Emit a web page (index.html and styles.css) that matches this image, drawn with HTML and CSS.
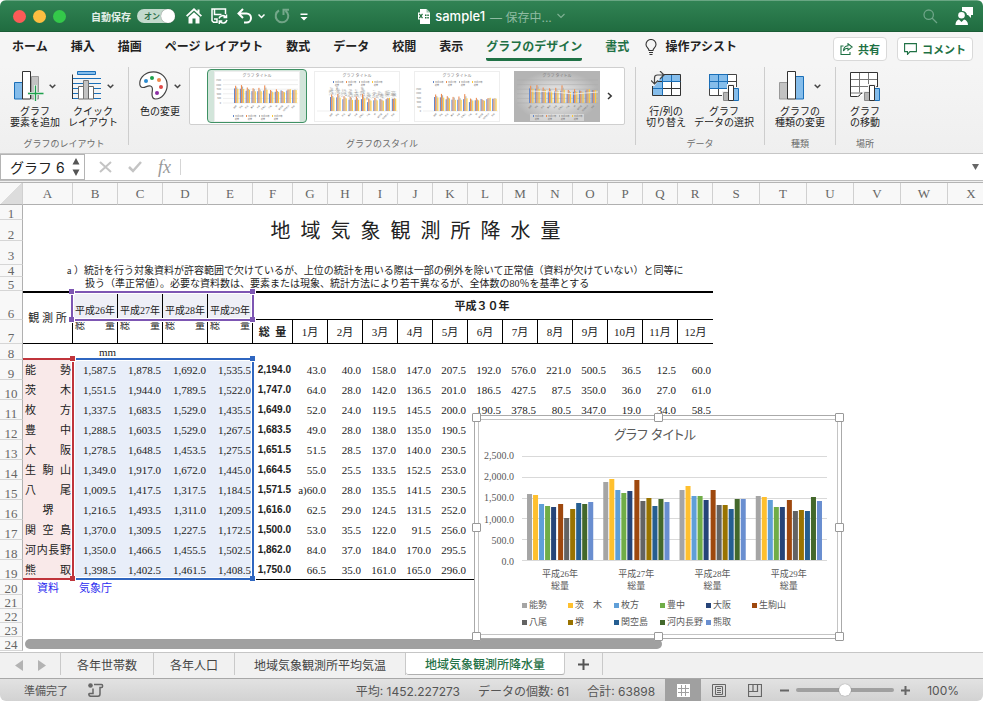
FILE: index.html
```html
<!DOCTYPE html>
<html lang="ja">
<head>
  <meta charset="UTF-8">
  <meta name="viewport" content="width=device-width, initial-scale=1.0">
  <title>sample1</title>
  <link rel="stylesheet" href="styles.css">
</head>
<body>
  <div class="window">
    <header class="titlebar">
      <div class="title-left">
        <div class="lights">
          <button class="light red" aria-label="閉じる"></button>
          <button class="light yellow" aria-label="しまう"></button>
          <button class="light green" aria-label="拡大"></button>
        </div>
        <label class="autosave">自動保存
          <span class="switch"><input type="checkbox" checked><span>オン</span></span>
        </label>
        <div class="quick">
          <button aria-label="ホーム"><svg width="16" height="16" viewBox="0 0 16 16"><path d="M8 0 0 7.5l1.2 1.3L8 2.6l6.800 6.200L16 7.500 13.500 5.200V1.500h-2v1.800z" fill="#fff"/><path d="M8 4.200 2.500 9.200V15.500h4v-5h3v5h4V9.200z" fill="#fff"/></svg></button>
          <button aria-label="保存"><svg width="17" height="17" viewBox="0 0 17 17" fill="none" stroke="#fff" stroke-width="1.500"><path d="M6 14.300H2.500L1 12.800V1h13.500v5"/><path d="M3.500 1v5.500h7"/><path d="M3 11h3v4"/><path d="M8 10.500a4 4 0 0 1 7-1.300M15.500 6.500v3h-3M16 12a4 4 0 0 1-7 1.500M8.300 16v-3h3"/></svg></button>
          <button aria-label="元に戻す"><svg width="16" height="16" viewBox="0 0 16 16" fill="none" stroke="#fff" stroke-width="2"><path d="M6 1 1.500 5.500 6 10M2 5.500h7.500a4.500 4.500 0 0 1 0 9H7"/></svg></button>
          <button class="history" aria-label="履歴"><svg width="7" height="16" viewBox="0 0 7 16" fill="none" stroke="#fff" stroke-width="1.500"><path d="m.5 6.500 3 3 3-3"/></svg></button>
          <button class="dim" aria-label="やり直し"><svg width="16" height="16" viewBox="0 0 16 16" fill="none" stroke="#fff" stroke-width="2"><path d="M11.500 2.800A6.300 6.300 0 1 1 5 2.500M9.500 7V1.800H15"/></svg></button>
          <button aria-label="カスタマイズ"><svg width="10" height="16" viewBox="0 0 10 16"><path d="M1.500 5.500h7v1.500h-7zM1.500 9h7L5 12.500z" fill="#fff"/></svg></button>
        </div>
      </div>
      <div class="doc">
        <svg width="12" height="15" viewBox="0 0 12 15"><path d="M2 0h6.500L12 3.500V15H2z" fill="#fff"/><path d="M8.500 0v3.500H12" fill="#9cc6ad"/><path d="M0 3.500h6v7H0z" fill="#fff"/><path d="m1.300 4.800 3.200 4.400M4.500 4.800 1.300 9.200" stroke="#23713f" stroke-width="1.200"/><path d="M7 5.500h1.500v1.500H7zM9.300 5.500h1.500v1.500H9.300zM7 8h1.500v1.500H7zM9.300 8h1.500v1.500H9.300z" fill="#23713f"/></svg>
        <span class="doc-name">sample1</span>
        <span class="doc-state">— 保存中...</span>
        <svg width="8" height="6" viewBox="0 0 8 6" fill="none" stroke="#7db092" stroke-width="1.200"><path d="m.5 1 3.500 3.500L7.500 1"/></svg>
      </div>
      <div class="title-right">
        <button aria-label="検索"><svg width="15" height="15" viewBox="0 0 15 15" fill="none" stroke="#6ea588" stroke-width="1.300"><circle cx="5.700" cy="5.700" r="4.700"/><path d="m9 9 5 5"/></svg></button>
        <button aria-label="アカウント"><svg width="18" height="18" viewBox="0 0 18 18" fill="#fff"><path d="M7 0h11v8h-2v3l-3-3h-1A4.500 4.500 0 0 0 7 4z"/><circle cx="6.500" cy="8.300" r="3.300"/><path d="M.5 18c0-4 2.500-5.500 3.500-5.500L6.500 15 9 12.500c2 .5 4 2 4 5.500z"/></svg></button>
      </div>
    </header>

    <nav class="menu">
      <button>ホーム</button>
      <button>挿入</button>
      <button>描画</button>
      <button>ページ レイアウト</button>
      <button>数式</button>
      <button>データ</button>
      <button>校閲</button>
      <button>表示</button>
      <button class="context current">グラフのデザイン</button>
      <button class="context">書式</button>
      <button class="assist"><svg width="12" height="17" viewBox="0 0 12 17" fill="none" stroke="#333" stroke-width="1.100"><path d="M4 11.500C4 9 1 8.500 1 5.500a5 5 0 0 1 10 0c0 3-3 3.500-3 6zM4 13.500h4M4.500 15.500h3"/></svg>操作アシスト</button>
      <div class="menu-right">
        <button class="pill"><svg width="13" height="12" viewBox="0 0 13 12" fill="none" stroke="#1f7145" stroke-width="1.100"><path d="M3.500 3H1v8.500h9V9"/><path d="M8 .8 12.200 4 8 7.200V5.300C6 5.200 4.500 6 3.500 8c0-3.500 2-5 4.500-5.200z"/></svg>共有</button>
        <button class="pill"><svg width="13" height="12" viewBox="0 0 13 12" fill="none" stroke="#1f7145" stroke-width="1.100"><path d="M.6.600h11.800v8H6l-2.500 2.800V8.600H.6z"/></svg>コメント</button>
      </div>
    </nav>

    <section class="ribbon">
      <div class="group">
        <div class="tools">
          <button class="tool">
            <span class="tool-icon">
              <svg width="30" height="30" viewBox="0 0 30 30"><path d="M17.500 5.500h7V28h-7z" fill="#c3c3c3" stroke="#999"/><path d="M.5 11.500h8V28h-8z" fill="#85bdeb" stroke="#1a6fb8"/><path d="M8.500.500h8V28h-8z" fill="#fff" stroke="#333"/><path d="M21.500 14v16M13.500 22.500h16" stroke="#f2f2f2" stroke-width="3"/><path d="M21.500 14.500V30M14 22.500h15.500" stroke="#1ea14c" stroke-width="1.300"/></svg>
              <svg class="chev" width="7" height="5" viewBox="0 0 7 5"><path d="m.7.700 2.800 2.800L6.300.700"/></svg>
            </span>
            グラフ<br>要素を追加
          </button>
          <button class="tool">
            <span class="tool-icon">
              <svg width="30" height="30" viewBox="0 0 30 30"><path d="M5.500.500h18v3h-18z" fill="#85bdeb" stroke="#1a6fb8"/><path d="M1 7.500h28M1 12.500h28M1 17.500h28M1 22.500h28M1 27.500h28" stroke="#1a6fb8"/><path d="M.5 3.500V28" stroke="#333"/><path d="M6.500 15.500h5V28h-5z" fill="#fff" stroke="#666"/><path d="M11.500 9.500h5V28h-5z" fill="#c3c3c3" stroke="#777"/><path d="M16.500 15.500h5V28h-5z" fill="#fff" stroke="#666"/></svg>
              <svg class="chev" width="7" height="5" viewBox="0 0 7 5"><path d="m.7.700 2.800 2.800L6.300.700"/></svg>
            </span>
            クイック<br>レイアウト
          </button>
        </div>
        <div class="group-name">グラフのレイアウト</div>
      </div>

      <div class="group">
        <div class="tools">
          <button class="tool">
            <span class="tool-icon">
              <svg width="30" height="30" viewBox="0 0 30 30"><path d="M14.500.800C7 .800 1 6 .800 12c-.2 3 1 4.500 3.200 4.500 3 0 4.500-2.500 7.500-1.500 3.500 1.200 1.500 4.500 1.500 8 0 3 1 5 3.500 5 6 0 11.700-6.500 11.700-14S22 .800 14.500.800z" fill="#fff" stroke="#444" stroke-width="1.200"/><circle cx="7" cy="10" r="2" fill="#2b8bd0"/><circle cx="13" cy="7" r="2" fill="#1ea14c"/><circle cx="20" cy="9" r="2" fill="#ef8a4b"/><circle cx="22" cy="16" r="2" fill="#e04848"/><circle cx="18" cy="22" r="2" fill="#8d2fa5"/></svg>
              <svg class="chev" width="7" height="5" viewBox="0 0 7 5"><path d="m.7.700 2.800 2.800L6.300.700"/></svg>
            </span>
            色の変更
          </button>
          <div class="gallery">
            <div class="thumbs" id="thumbs"></div>
            <button class="more" aria-label="次へ"><svg width="6" height="8" viewBox="0 0 6 8" fill="none" stroke="#333" stroke-width="1.500"><path d="m1 1 3.200 3L1 7"/></svg></button>
          </div>
        </div>
        <div class="group-name">グラフのスタイル</div>
      </div>

      <div class="group">
        <div class="tools">
          <button class="tool">
            <span class="tool-icon">
              <svg width="30" height="30" viewBox="0 0 30 30"><path d="M1.500 3.500h28v21h-28z" fill="#fff"/><path d="M1.500 3.500h28v7h-18v14h-10z" fill="#85bdeb"/><path d="M11.500 3.500v21M20.500 3.500v21M1.500 10.500h28M1.500 17.500h28M1.500 3.500h28v21h-28z" fill="none" stroke="#333"/><path d="M11.500 10.500h18M11.500 3.500v21M20.500 4v6M2 17.500h9" stroke="#1a6fb8"/><path d="M0-1h15L3.500 15H0z" fill="#f2f2f2"/><path d="M9 0l4 4-4 4M13 4H6.500Q3.500 4 3.500 7v6M0 9.500 3.500 13 7 9.500" fill="none" stroke="#444" stroke-width="1.200"/></svg>
            </span>
            行/列の<br>切り替え
          </button>
          <button class="tool">
            <span class="tool-icon">
              <svg width="30" height="30" viewBox="0 0 30 30"><path d="M.5 3.500h27v21H.5z" fill="#fff"/><path d="M.5 3.500h18v14H.5z" fill="#85bdeb"/><path d="M9.500 3.500v21M18.500 3.500v21M.5 10.500h27M.5 17.500h27M.5 3.500h27v21H.5z" fill="none" stroke="#444"/><path d="M.5 3.500h18v14H.5zM9.500 3.500v14M.5 10.500h18" fill="none" stroke="#1a6fb8"/><path d="M18 13h8v3h4v14H13V20h5z" fill="#f2f2f2"/><path d="M14.500 21.500h5v8h-5z" fill="#b5b5b5" stroke="#888"/><path d="M24.500 17.500h5v12h-5z" fill="#85bdeb" stroke="#1a6fb8"/><path d="M19.500 14.500h5v15h-5z" fill="#fff" stroke="#333"/></svg>
            </span>
            グラフ<br>データの選択
          </button>
        </div>
        <div class="group-name">データ</div>
      </div>

      <div class="group">
        <div class="tools">
          <button class="tool">
            <span class="tool-icon">
              <svg width="30" height="30" viewBox="0 0 30 30"><path d="M.5 11.500h8V28h-8z" fill="#c3c3c3" stroke="#999"/><path d="M16.500 5.500h8V28h-8z" fill="#85bdeb" stroke="#1a6fb8"/><path d="M8.500.500h8V28h-8z" fill="#fff" stroke="#333"/></svg>
              <svg class="chev" width="7" height="5" viewBox="0 0 7 5"><path d="m.7.700 2.800 2.800L6.300.700"/></svg>
            </span>
            グラフの<br>種類の変更
          </button>
        </div>
        <div class="group-name">種類</div>
      </div>

      <div class="group last">
        <div class="tools">
          <button class="tool">
            <span class="tool-icon">
              <svg width="30" height="30" viewBox="0 0 30 30"><path d="M.5 1.500h27v20l-20 4h-7z" fill="#fff"/><path d="M9.500 1.500v20M18.500 1.500v20M.5 8.500h27M.5 15.500h27M12 22H.5" stroke="#777"/><path d="M27.500 16V1.500H.5v24h7c3 0 2-3.500 5-3.500" fill="none" stroke="#333"/><path d="M18 13h8v3h4v14H13V20h5z" fill="#f2f2f2"/><path d="M14.500 21.500h5v8h-5z" fill="#b5b5b5" stroke="#888"/><path d="M24.500 17.500h5v12h-5z" fill="#85bdeb" stroke="#1a6fb8"/><path d="M19.500 14.500h5v15h-5z" fill="#fff" stroke="#333"/></svg>
            </span>
            グラフ<br>の移動
          </button>
        </div>
        <div class="group-name">場所</div>
      </div>
    </section>

    <section class="formula">
      <div class="namebox">
        <input type="text" value="グラフ 6" aria-label="名前ボックス">
        <svg width="8" height="18" viewBox="0 0 8 18" fill="#555"><path d="M4 0 7.500 6.500h-7zM4 18 .500 11.500h7z"/></svg>
      </div>
      <button aria-label="キャンセル"><svg width="13" height="12" viewBox="0 0 13 12" stroke="#c4c4c4" stroke-width="2"><path d="m1 1 11 10M12 1 1 11"/></svg></button>
      <button aria-label="入力"><svg width="14" height="12" viewBox="0 0 14 12" fill="none" stroke="#c4c4c4" stroke-width="2.500"><path d="m1 6 4 4 8-9"/></svg></button>
      <button class="fx" aria-label="関数の挿入">fx</button>
      <input class="formula-input" type="text" aria-label="数式">
      <button class="expand" aria-label="数式バーを広げる"><svg width="7" height="6" viewBox="0 0 7 6"><path d="M0 0h7L3.500 6z" fill="#666"/></svg></button>
    </section>

    <main class="sheet">
      <table class="grid">
        <colgroup>
          <col class="c-head"><col class="c-name"><col class="c-year" span="4"><col class="c-total"><col class="c-month" span="12"><col class="c-std" span="6">
        </colgroup>
        <thead>
          <tr>
            <th class="corner"></th>
            <th>A</th><th>B</th><th>C</th><th>D</th><th>E</th><th>F</th><th>G</th><th>H</th><th>I</th><th>J</th><th>K</th><th>L</th><th>M</th><th>N</th><th>O</th><th>P</th><th>Q</th><th>R</th><th>S</th><th>T</th><th>U</th><th>V</th><th>W</th><th>X</th>
          </tr>
        </thead>
        <tbody>
          <tr class="r1"><th>1</th></tr>
          <tr class="r2"><th>2</th><td colspan="2"></td><td colspan="16" class="sheet-title">地&nbsp; 域&nbsp; 気&nbsp; 象&nbsp; 観&nbsp; 測&nbsp; 所&nbsp; 降&nbsp; 水&nbsp; 量</td></tr>
          <tr class="r3"><th>3</th></tr>
          <tr class="r4"><th>4</th><td colspan="18" class="note">a ）統計を行う対象資料が許容範囲で欠けているが、上位の統計を用いる際は一部の例外を除いて正常値（資料が欠けていない）と同等に</td></tr>
          <tr class="r5"><th>5</th><td colspan="18" class="note more-note">扱う（準正常値）。必要な資料数は、要素または現象、統計方法により若干異なるが、全体数の80％を基準とする</td></tr>
          <tr class="r6">
            <th>6</th>
            <td rowspan="2" class="station-head">観 測 所</td>
            <td class="year">平成26年</td><td class="year">平成27年</td><td class="year">平成28年</td><td class="year">平成29年</td>
            <td colspan="13" class="era">平成３０年</td>
          </tr>
          <tr class="r7">
            <th>7</th>
            <td class="sum">総 量</td><td class="sum">総 量</td><td class="sum">総 量</td><td class="sum">総 量</td>
            <td class="total-head">総&nbsp; 量</td>
            <td>1月</td><td>2月</td><td>3月</td><td>4月</td><td>5月</td><td>6月</td><td>7月</td><td>8月</td><td>9月</td><td>10月</td><td>11月</td><td>12月</td>
          </tr>
          <tr class="r8"><th>8</th><td></td><td class="unit">mm</td></tr>
        </tbody>
        <tbody id="stations"></tbody>
        <tbody>
          <tr class="r20"><th>20</th><td class="source">資料</td><td class="source">気象庁</td></tr>
          <tr class="r21"><th>21</th></tr>
          <tr class="r21"><th>22</th></tr>
          <tr class="r21"><th>23</th></tr>
          <tr class="r21"><th>24</th></tr>
        </tbody>
      </table>

      <div class="range range-values"><i class="tr"></i><i class="br"></i></div>
      <div class="range range-names"><i class="tr"></i><i class="br"></i></div>
      <div class="range range-years"><i class="tl"></i><i class="tr"></i><i class="bl"></i><i class="br"></i></div>
      <div class="hscroll"></div>

      <figure class="chart">
        <div class="chart-body">
          <figcaption>グラフ タイトル</figcaption>
          <div class="plot-row">
            <div class="axis"><span>2,500.0</span><span>2,000.0</span><span>1,500.0</span><span>1,000.0</span><span>500.0</span><span>0.0</span></div>
            <svg class="plot" id="plot" viewBox="0 0 304 106" preserveAspectRatio="none"></svg>
          </div>
          <div class="cats">
            <span>平成26年<br>総量</span><span>平成27年<br>総量</span><span>平成28年<br>総量</span><span>平成29年<br>総量</span>
          </div>
          <div class="legend" id="legend"></div>
        </div>
        <i class="h tl"></i><i class="h tc"></i><i class="h tr"></i>
        <i class="h ml"></i><i class="h mr"></i>
        <i class="h bl"></i><i class="h bc"></i><i class="h br"></i>
      </figure>
    </main>

    <nav class="sheet-tabs">
      <button class="arrow" aria-label="前のシート"><svg width="8" height="11" viewBox="0 0 8 11"><path d="M8 0v11L0 5.500z" fill="#b3b3b3"/></svg></button>
      <button class="arrow" aria-label="次のシート"><svg width="8" height="11" viewBox="0 0 8 11"><path d="M0 0v11l8-5.500z" fill="#b3b3b3"/></svg></button>
      <button class="tab first">各年世帯数</button>
      <button class="tab">各年人口</button>
      <button class="tab long">地域気象観測所平均気温</button>
      <button class="tab long active">地域気象観測所降水量</button>
      <button class="add" aria-label="シートを追加"><svg width="11" height="11" viewBox="0 0 11 11" stroke="#555" stroke-width="2"><path d="M5.500 0v11M0 5.500h11"/></svg></button>
    </nav>

    <footer class="status">
      <span>準備完了</span>
      <svg class="macro" width="16" height="14" viewBox="0 0 16 14" fill="none" stroke="#666" stroke-width="1.500"><circle cx="2.500" cy="2.500" r="2.300" fill="#666" stroke="none"/><path d="M6 1.500h7.500c1.500 0 1.500 3 0 3H12V11c0 2-1.500 2.200-2 2.200H2.500M5 5.500v5H1.500c-1 0-1 2.700 1 2.700"/></svg>
      <div class="stats">
        <span>平均: 1452.227273</span>
        <span>データの個数: 61</span>
        <span>合計: 63898</span>
      </div>
      <div class="views">
        <button class="on" aria-label="標準"><svg width="13" height="13" viewBox="0 0 13 13" fill="#fff"><path d="M0 0h13v13H0z"/><path d="M1 4.500h11M1 8.500h11M4.500 1v11M8.500 1v11" stroke="#a0a0a0"/></svg></button>
        <button aria-label="ページ レイアウト"><svg width="14" height="13" viewBox="0 0 14 13" fill="none" stroke="#666"><path d="M.5.500h13v12H.5zM3.500 2.500h7v8h-7zM5 4.500h4M5 6.500h4M5 8.500h4"/></svg></button>
        <button aria-label="改ページ"><svg width="14" height="13" viewBox="0 0 14 13" fill="none" stroke="#666" stroke-width="1.200"><path d="M.5.500h13v12H.5zM.5 7.500h9v-7M5 .500v7"/></svg></button>
      </div>
      <div class="zoom">
        <button aria-label="縮小"><svg width="9" height="9" viewBox="0 0 9 9" stroke="#666" stroke-width="2"><path d="M0 4.500h9"/></svg></button>
        <input type="range" min="0" max="100" value="50" aria-label="ズーム">
        <button aria-label="拡大"><svg width="9" height="9" viewBox="0 0 9 9" stroke="#666" stroke-width="2"><path d="M0 4.500h9M4.500 0v9"/></svg></button>
        <span class="percent">100%</span>
      </div>
    </footer>
  </div>

  <script>
    // 観測所ごとの降水量: 平成26〜29年, 平成30年の総量, 月別
    const stations = [
      { name: '能勢', color: '#a5a5a5', years: [1587.5, 1878.5, 1692.0, 1535.5], total: 2194.0, months: [43.0, 40.0, 158.0, 147.0, 207.5, 192.0, 576.0, 221.0, 500.5, 36.5, 12.5, 60.0] },
      { name: '茨木', legend: '茨\u3000木', color: '#ffc02e', years: [1551.5, 1944.0, 1789.5, 1522.0], total: 1747.0, months: [64.0, 28.0, 142.0, 136.5, 201.0, 186.5, 427.5, 87.5, 350.0, 36.0, 27.0, 61.0] },
      { name: '枚方', color: '#5f9fd8', years: [1337.5, 1683.5, 1529.0, 1435.5], total: 1649.0, months: [52.0, 24.0, 119.5, 145.5, 200.0, 190.5, 378.5, 80.5, 347.0, 19.0, 34.0, 58.5] },
      { name: '豊中', color: '#70ad47', years: [1288.5, 1603.5, 1529.0, 1267.5], total: 1683.5, months: [49.0, 28.0, 138.0, 135.0, 190.5] },
      { name: '大阪', color: '#264478', years: [1278.5, 1648.5, 1453.5, 1275.5], total: 1651.5, months: [51.5, 28.5, 137.0, 140.0, 230.5] },
      { name: '生駒山', color: '#9e480e', years: [1349.0, 1917.0, 1672.0, 1445.0], total: 1664.5, months: [55.0, 25.5, 133.5, 152.5, 253.0] },
      { name: '八尾', color: '#636363', years: [1009.5, 1417.5, 1317.5, 1184.5], total: 1571.5, mark: 'a)', months: [60.0, 28.0, 135.5, 141.5, 230.5] },
      { name: '堺', color: '#997300', years: [1216.5, 1493.5, 1311.0, 1209.5], total: 1616.0, months: [62.5, 29.0, 124.5, 131.5, 252.0] },
      { name: '関空島', color: '#255e91', years: [1370.0, 1309.5, 1227.5, 1172.5], total: 1500.0, months: [53.0, 35.5, 122.0, 91.5, 256.0] },
      { name: '河内長野', color: '#43682b', years: [1350.0, 1466.5, 1455.5, 1502.5], total: 1862.0, months: [84.0, 37.0, 184.0, 170.0, 295.5] },
      { name: '熊取', color: '#698ed0', years: [1398.5, 1402.5, 1461.5, 1408.5], total: 1750.0, months: [66.5, 35.0, 161.0, 165.0, 296.0] }
    ];

    function fmt(n) {
      return n.toLocaleString('en-US', { minimumFractionDigits: 1 });
    }

    function fillTable() {
      let html = '';
      stations.forEach((s, i) => {
        html += '<tr class="data"><th>' + (i + 9) + '</th>';
        html += '<td class="name' + (s.name.length === 1 ? ' single' : '') + '">' + s.name.split('').join(s.name.length > 3 ? '' : ' ') + '</td>';
        s.years.forEach(v => { html += '<td class="val">' + fmt(v) + '</td>'; });
        html += '<td class="total">' + fmt(s.total) + '</td>';
        for (let m = 0; m < 12; m++) {
          const v = s.months[m];
          html += '<td>' + (m === 0 && s.mark ? s.mark : '') + (v === undefined ? '' : fmt(v)) + '</td>';
        }
        html += '</tr>';
      });
      document.getElementById('stations').innerHTML = html;
    }

    function drawPlot() {
      let svg = '';
      for (let g = 0; g <= 5; g++) {
        svg += '<path d="M0 ' + (Math.round(g * 20.8) + 0.5) + 'h304" stroke="#d9d9d9"/>';
      }
      for (let y = 0; y < 4; y++) {
        stations.forEach((s, i) => {
          const h = Math.round(s.years[y] * 104 / 2500);
          svg += '<rect x="' + (y * 76 + 5 + Math.round(i * 6.1)) + '" y="' + (104 - h) + '" width="5" height="' + h + '" fill="' + s.color + '"/>';
        });
      }
      document.getElementById('plot').innerHTML = svg;
      document.getElementById('legend').innerHTML = stations.map(s =>
        '<span><i style="background:' + s.color + '"></i>' + (s.legend || s.name) + '</span>').join('');
    }

    // スタイル ギャラリーの縮小グラフ
    function thumb(t) {
      const colors = ['#6288cc', '#ef8c50', '#b0b0b0', '#ffc93a'];
      let svg = '<svg width="86" height="51" viewBox="0 0 86 51">';
      if (t.dark) {
        svg += '<defs><radialGradient id="shade"><stop offset="0" stop-color="#f4f4f4"/><stop offset="1" stop-color="#b4b4b4"/></radialGradient></defs><rect width="86" height="51" fill="url(#shade)"/><rect x="16" y="43" width="54" height="7" fill="#fff" opacity=".4"/>';
      } else {
        svg += '<rect x=".5" y=".5" width="85" height="50" fill="#fff" stroke="#eee"/>';
      }
      svg += '<text x="43" y="6" font-size="4" text-anchor="middle">グラフ タイトル</text>';
      for (let g = 0; g <= 5; g++) {
        const y = t.base - g * t.h / 5;
        if (t.lines || g === 0) svg += '<path d="M' + (t.axis ? 9 : 3) + ' ' + y + 'H84" stroke="' + (t.dark ? '#aaa' : '#ddd') + '" stroke-width=".5"/>';
        if (t.axis) svg += '<text x="7" y="' + (y + 1) + '" font-size="2" text-anchor="end">' + g * 500 + '</text>';
      }
      const step = (84 - t.x) / 11;
      stations.forEach((s, i) => {
        s.years.forEach((v, k) => {
          const h = v * t.h / 2500;
          svg += '<rect x="' + (t.x + i * step + k * 1.1) + '" y="' + (t.base - h) + '" width="1.1" height="' + h + '" fill="' + colors[k] + '"/>';
          if (t.values) svg += '<text transform="translate(' + (t.x + i * step + k * 1.1 + 1) + ' ' + (t.base - h - 1) + ') rotate(-90)" font-size="2">' + fmt(v) + '</text>';
        });
        svg += '<text transform="translate(' + (t.x + i * step + 3) + ' ' + (t.base + 3) + ') rotate(-45)" font-size="2" text-anchor="end">' + s.name + '</text>';
      });
      if (t.dark) svg += '<path d="M17 20 40 21 60 23 84 21" stroke="#fff" stroke-width="1" fill="none" opacity=".7"/>';
      for (let k = 0; k < 4; k++) {
        const x = 19 + k * 13;
        svg += '<rect x="' + x + '" y="' + (t.key - 1) + '" width="1" height="2" fill="' + colors[k] + '"/>';
        svg += '<text x="' + (x + 2) + '" y="' + (t.key + 1) + '" font-size="2">平成' + (26 + k) + '年</text>';
        svg += '<text x="' + (x + 2) + '" y="' + (t.key + 4) + '" font-size="2">総量</text>';
      }
      return svg + '</svg>';
    }

    function drawThumbs() {
      const styles = [
        { base: 32, h: 23, x: 20, key: 45, axis: true, lines: true },
        { base: 40, h: 22, x: 16, key: 11, values: true },
        { base: 40, h: 22, x: 20, key: 11, axis: true },
        { base: 32, h: 23, x: 15, key: 45, lines: true, dark: true }
      ];
      document.getElementById('thumbs').innerHTML = styles.map((t, i) =>
        '<button class="thumb' + (i === 0 ? ' selected' : '') + '" aria-label="スタイル ' + (i + 1) + '">' + thumb(t) + '</button>').join('');
    }

    fillTable();
    drawPlot();
    drawThumbs();
  </script>
</body>
</html>
```
FILE: styles.css
```css
* {
  box-sizing: border-box;
}
body {
  margin: 0;
  background: #fff;
  font-family: Inter, 'Noto Sans CJK JP', sans-serif;
  font-size: 12px;
  color: #222;
}
button, input {
  font: inherit;
  color: inherit;
  border: none;
  background: none;
  padding: 0;
  margin: 0;
}
svg {
  display: block;
  flex: none;
}
.window {
  display: flex;
  flex-direction: column;
  height: 100vh;
  border-radius: 6px;
  overflow: hidden;
  white-space: nowrap;
}

/* タイトルバー */
.titlebar {
  flex: none;
  height: 32px;
  display: grid;
  grid-template-columns: 1fr auto 1fr;
  align-items: center;
  background: linear-gradient(#318354, #206c40);
  border-top: 1px solid #69a683;
  border-bottom: 1px solid #1a5c36;
  color: #fff;
}
.title-left, .lights, .autosave, .quick, .doc, .title-right {
  display: flex;
  align-items: center;
}
.lights {
  gap: 7px;
  padding-left: 13px;
}
.light {
  width: 13px;
  height: 13px;
  border-radius: 50%;
}
.light.red { background: #fc5b57; }
.light.yellow { background: #fdbe41; }
.light.green { background: #34c84a; }
.autosave {
  margin-left: 25px;
  gap: 6px;
  font-size: 10px;
  font-weight: bold;
  color: #e3efe8;
}
.switch {
  position: relative;
  width: 38px;
  height: 14px;
  border-radius: 7px;
  background: #c3dacd;
  color: #2c6e48;
  line-height: 14px;
  padding-left: 7px;
  font-size: 8px;
}
.switch input {
  appearance: none;
  position: absolute;
  right: 0;
  top: 0;
  width: 14px;
  height: 14px;
  border-radius: 50%;
  background: #fff;
  box-shadow: 0 0 1px #555;
}
.quick {
  gap: 9px;
  margin-left: 11px;
}
.history {
  margin-left: -4px;
}
.dim {
  opacity: 0.35;
}
.doc {
  gap: 5px;
}
.doc-name {
  font-size: 13px;
  font-weight: 500;
}
.doc-state {
  color: #8fbba2;
}
.title-right {
  justify-content: flex-end;
  gap: 17px;
  padding-right: 10px;
}

/* メニュー */
.menu {
  flex: none;
  display: flex;
  align-items: center;
  gap: 23px;
  height: 33px;
  padding: 0 10px 0 12px;
  background: #f5f5f5;
  font-weight: bold;
}
.menu > button {
  height: 24px;
  line-height: 20px;
  border-bottom: 3px solid transparent;
}
.menu .context {
  color: #1f7145;
}
.menu .current {
  border-bottom-color: #1f7145;
  border-radius: 2px;
}
.menu .assist {
  display: flex;
  align-items: center;
  gap: 8px;
  margin-left: -7px;
}
.menu-right {
  display: flex;
  gap: 10px;
  margin-left: auto;
}
.pill {
  display: flex;
  align-items: center;
  gap: 5px;
  height: 24px;
  padding: 0 6px;
  border: 1px solid #d9d9d9;
  border-radius: 4px;
  background: #fff;
  color: #1f7145;
  font-size: 11px;
  font-weight: bold;
}

/* リボン */
.ribbon {
  flex: none;
  display: flex;
  height: 89px;
  padding: 2px 0 8px;
  background: linear-gradient(#f5f5f5, #efefef);
  border-bottom: 1px solid #c6c6c6;
}
.group {
  display: flex;
  flex-direction: column;
  justify-content: space-between;
  padding: 0 10px;
  border-right: 1px solid #cdcdcd;
}
.group.last {
  border: none;
  padding: 0 14px;
}
.tools {
  display: flex;
  align-items: flex-start;
  gap: 8px;
}
.tool {
  padding-top: 4px;
  font-size: 10px;
  line-height: 11px;
  text-align: center;
}
.tool-icon {
  display: flex;
  align-items: center;
  justify-content: center;
  gap: 5px;
  height: 30px;
  margin-bottom: 5px;
}
.tool .chev {
  fill: none;
  stroke: #444;
  stroke-width: 1.5px;
}
.group-name {
  margin-bottom: -4px;
  font-size: 9px;
  line-height: 11px;
  text-align: center;
  color: #6a6a6a;
}
.gallery {
  display: flex;
  align-items: center;
  width: 436px;
  height: 58px;
  border: 1px solid #cfcfcf;
  border-radius: 2px;
  background: #fff;
}
.thumbs {
  flex: 1;
  display: flex;
  padding-left: 17px;
}
.thumb {
  width: 100px;
  height: 54px;
  padding: 0 6px;
  border: 1px solid transparent;
  border-radius: 4px;
}
.thumb text {
  fill: #777;
}
.thumb.selected {
  border-color: #3f9164;
  background: #d2e5da;
}
.more {
  width: 17px;
}

/* 数式バー */
.formula {
  flex: none;
  display: flex;
  align-items: center;
  height: 29px;
  padding-bottom: 2px;
  background: #fff;
  border-bottom: 1px solid #b4b4b4;
  box-shadow: inset 0 -1px #f0f0f0, inset 0 -2px #bdbdbd;
}
.formula button {
  display: flex;
  margin-right: 16px;
}
.namebox {
  display: flex;
  align-items: center;
  align-self: stretch;
  width: 85px;
  margin-right: 14px;
  padding-right: 4px;
  border: 1px solid #b4b4b4;
}
.namebox input {
  flex: 1;
  min-width: 0;
  padding-left: 9px;
  font-size: 14px;
}
.formula .fx {
  margin-right: 9px;
  font-family: 'Liberation Serif', serif;
  font-style: italic;
  font-size: 18px;
  line-height: 20px;
  color: #999;
}
.formula-input {
  flex: 1;
  min-width: 0;
  height: 16px;
  border-left: 1px solid #d5d5d5;
}
.formula .expand {
  margin: 0 4px;
}

/* シート */
.sheet {
  position: relative;
  flex: 1;
  min-height: 0;
  overflow: hidden;
  background: #fff;
}
.grid {
  table-layout: fixed;
  width: 1px;
  border-spacing: 0;
  font-family: 'Liberation Serif', 'Noto Sans CJK JP', serif;
  font-size: 11px;
  line-height: 12px;
}
.c-head { width: 23px; }
.c-name { width: 50px; }
.c-year { width: 45px; }
.c-total { width: 40px; }
.c-month { width: 35px; }
.c-std { width: 47px; }
.grid td {
  padding: 0 2px;
  text-align: right;
}
.grid th {
  padding: 0;
  font-weight: normal;
  font-size: 13px;
  color: #666;
  background: #f8f8f8;
}
.grid thead th {
  height: 22px;
  border-right: 1px solid #d0d0d0;
  border-bottom: 1px solid #b0b0b0;
}
.grid .corner {
  background: linear-gradient(135deg, #f8f8f8 50%, #dcdcdc 50%);
}
.grid tbody th {
  vertical-align: bottom;
  line-height: 11px;
  border-right: 1px solid #b0b0b0;
  border-bottom: 1px solid #d6d6d6;
}
.r1 { height: 15px; }
.r2 { height: 21px; }
.r3 { height: 24px; }
.r4 { height: 12px; }
.r5 { height: 14px; }
.r6 { height: 29px; }
.r7 { height: 24px; }
.r8 { height: 16px; }
.data { height: 20px; }
.r20 { height: 15px; }
.r21 { height: 14px; }
.grid .r3 th {
  padding-bottom: 3px;
}
.grid .sheet-title {
  font-size: 20px;
  line-height: 20px;
  text-align: center;
}
.grid .note {
  padding-left: 44px;
  font-size: 10px;
  text-align: left;
}
.grid .more-note {
  padding-left: 62px;
}
.r6 td {
  border-top: 2px solid #000;
}
.grid .station-head {
  text-align: center;
  border-right: 1px solid #000;
  border-bottom: 1px solid #000;
}
.grid .year {
  vertical-align: bottom;
  text-align: center;
  padding: 0 0 3px;
  font-size: 10px;
  background: #eeeff6;
  border-right: 1px solid #000;
}
.grid .era {
  padding-left: 0;
  text-align: center;
  font-weight: bold;
  border-bottom: 1px solid #000;
}
.r7 td {
  border-right: 1px solid #000;
  border-bottom: 1px solid #000;
}
.grid .r7 td {
  text-align: center;
}
.r7 td:last-child {
  border-right: none;
}
.r7 .sum {
  vertical-align: top;
  font-size: 10px;
  text-align-last: justify;
}
.grid .total-head {
  font-weight: bold;
}
.grid .name {
  background: #f9e9e9;
  text-align-last: justify;
}
.grid .name.single {
  text-align-last: center;
}
.grid .val {
  background: #e8eef9;
}
.grid .total {
  font-family: 'Liberation Sans', sans-serif;
  font-size: 10px;
  font-weight: bold;
}
.data:last-child td {
  border-bottom: 1px solid #000;
}
.grid .source {
  color: #2a2af0;
  text-align: center;
}

/* 参照範囲の枠 */
.range {
  position: absolute;
  border: 2px solid;
  box-shadow: 0 0 0 1px #fff, inset 0 0 0 1px #fff;
}
.range i {
  position: absolute;
  width: 6px;
  height: 6px;
  background: currentColor;
  border: solid #fff;
  border-width: 0 1px 1px 0;
}
.range .tl, .range .tr { top: -4px; }
.range .bl, .range .br { bottom: -4px; }
.range .tl, .range .bl { left: -4px; }
.range .tr, .range .br { right: -4px; }
.range-years {
  left: 71px;
  top: 108px;
  width: 183px;
  height: 30px;
  color: #7d56b3;
}
.range-names {
  left: 23px;
  top: 175px;
  width: 51px;
  height: 222px;
  border-left: none;
  color: #c0343b;
  box-shadow: none;
}
.range-values {
  left: 72px;
  top: 175px;
  width: 182px;
  height: 222px;
  color: #2f66c0;
}
.hscroll {
  position: absolute;
  left: 25px;
  bottom: 3px;
  width: 637px;
  height: 10px;
  border-radius: 5px;
  background: #a0a0a0;
}

/* グラフ */
.chart {
  position: absolute;
  left: 474px;
  top: 232px;
  width: 368px;
  margin: 0;
  padding: 3px;
  border: 1px solid #aaa;
  background: #fff;
  font-family: 'Liberation Serif', 'Noto Sans CJK JP', serif;
  font-size: 9px;
  line-height: 12px;
  color: #595959;
}
.chart-body {
  height: 216px;
  padding: 6px 10px 0 4px;
  border: 1px solid #c4c4c4;
}
.chart figcaption {
  text-align: center;
  font-size: 13px;
  line-height: 18px;
  font-feature-settings: 'palt';
}
.plot-row {
  display: flex;
  align-items: center;
  gap: 8px;
  margin-top: 6px;
}
.axis {
  width: 31px;
  display: flex;
  flex-direction: column;
  justify-content: space-between;
  height: 118px;
  text-align: right;
  font-size: 10px;
}
.plot {
  flex: 1;
  width: 0;
  height: 106px;
}
.cats {
  display: flex;
  margin-left: 39px;
  text-align: center;
}
.cats span {
  flex: 1;
}
.legend {
  display: grid;
  grid-template-columns: repeat(6, 46px);
  row-gap: 5px;
  margin: 7px 0 0 39px;
}
.legend span {
  display: flex;
  align-items: center;
  gap: 2px;
}
.legend i {
  flex: none;
  width: 5px;
  height: 5px;
}
.h {
  position: absolute;
  width: 9px;
  height: 9px;
  border: 1px solid #999;
  border-radius: 1px;
  background: #fff;
}
.chart .tl, .chart .tc, .chart .tr { top: -3px; }
.chart .bl, .chart .bc, .chart .br { bottom: -3px; }
.chart .ml, .chart .mr { top: calc(50% - 4px); }
.chart .tl, .chart .ml, .chart .bl { left: -3px; }
.chart .tr, .chart .mr, .chart .br { right: -3px; }
.chart .tc, .chart .bc { left: calc(50% - 4px); }

/* シート見出し */
.sheet-tabs {
  flex: none;
  display: flex;
  height: 26px;
  padding-left: 7px;
  background: #f1f1f1;
  border-top: 1px solid #c6c6c6;
  color: #444;
}
.sheet-tabs .arrow {
  width: 23px;
  display: flex;
  align-items: center;
  justify-content: center;
}
.tab {
  height: 22px;
  padding: 0 16px;
  border-right: 1px solid #c9c9c9;
}
.tab.first {
  margin-left: 7px;
  border-left: 1px solid #c9c9c9;
}
.tab.long {
  padding: 0 19px;
}
.tab.active {
  background: #fff;
  color: #1f7145;
  font-weight: 500;
  border-bottom: 1px solid #b0b0b0;
  border-radius: 0 0 3px 3px;
}
.add {
  width: 38px;
  height: 22px;
  display: flex;
  align-items: center;
  justify-content: center;
  border-right: 1px solid #c9c9c9;
}

/* ステータスバー */
.status {
  flex: none;
  display: flex;
  align-items: center;
  height: 23px;
  padding: 0 24px;
  background: linear-gradient(#e2e2e2, #d2d2d2);
  border-top: 1px solid #a8a8a8;
  font-size: 11px;
  color: #555;
}
.macro {
  margin-left: 20px;
}
.stats {
  display: flex;
  gap: 18px;
  margin-left: auto;
  font-size: 12px;
}
.views {
  display: flex;
  align-self: stretch;
  margin-left: 10px;
}
.views button {
  width: 36px;
  display: flex;
  align-items: center;
  justify-content: center;
}
.views .on {
  background: #a0a0a0;
}
.zoom {
  display: flex;
  align-items: center;
  gap: 7px;
  margin-left: 7px;
}
.zoom input {
  appearance: none;
  width: 98px;
  height: 4px;
  border-radius: 2px;
  background: #a0a0a0;
}
.zoom input::-webkit-slider-thumb {
  appearance: none;
  width: 12px;
  height: 12px;
  border-radius: 50%;
  background: #fff;
  box-shadow: 0 0 1px #666;
}
.percent {
  margin-left: 10px;
  font-size: 12px;
}
```
